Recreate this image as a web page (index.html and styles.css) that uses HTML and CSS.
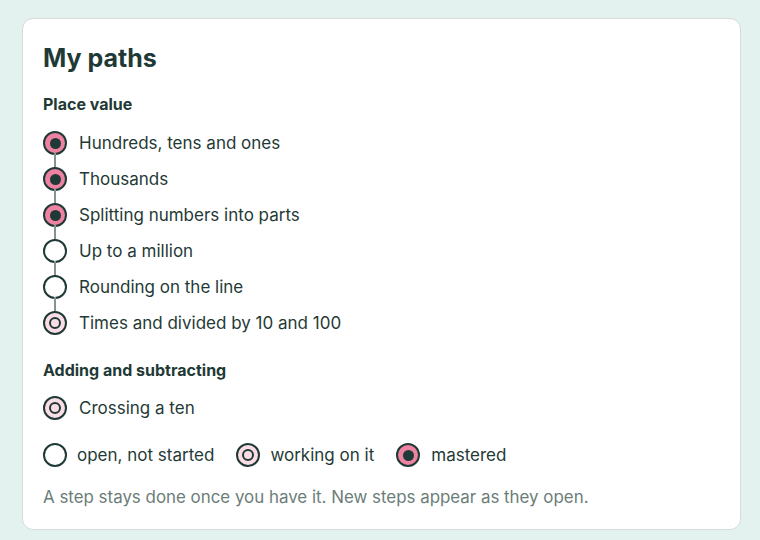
FILE: index.html
```html
<!DOCTYPE html>
<html lang="en">
  <head>
    <meta charset="UTF-8" />
    <meta name="viewport" content="width=device-width, initial-scale=1.0" />
    <title>My paths</title>
    <link rel="stylesheet" href="styles.css">
  </head>
  <body>
    <div class="card">
      <h2 class="title">My paths</h2>

      <h3 class="group">Place value</h3>
      <ul class="steps">
        <li class="step"><span class="dot done"></span>Hundreds, tens and ones</li>
        <li class="step"><span class="dot done"></span>Thousands</li>
        <li class="step"><span class="dot done"></span>Splitting numbers into parts</li>
        <li class="step"><span class="dot"></span>Up to a million</li>
        <li class="step"><span class="dot"></span>Rounding on the line</li>
        <li class="step"><span class="dot work"></span>Times and divided by 10 and 100</li>
      </ul>

      <h3 class="group">Adding and subtracting</h3>
      <ul class="steps">
        <li class="step"><span class="dot work"></span>Crossing a ten</li>
      </ul>

      <div class="legend">
        <span class="key"><span class="dot"></span>open, not started</span>
        <span class="key"><span class="dot work"></span>working on it</span>
        <span class="key"><span class="dot done"></span>mastered</span>
      </div>

      <p class="note">A step stays done once you have it. New steps appear as they open.</p>
    </div>
  </body>
</html>
```

FILE: styles.css
```css
body {
  margin: 0;
  padding: 18px 18px 0 22px;
  background-color: #e3f2ef;
  font-family: Inter, "Noto Sans", sans-serif;
  color: #1f3a36;
}
.card {
  width: 719px;
  box-sizing: border-box;
  background-color: #fff;
  border: 1px solid #d6dbd9;
  border-radius: 11px;
  padding: 23px 20px 21px 20px;
}
.title {
  margin: 0;
  font-size: 25px;
  line-height: 32px;
  font-weight: 700;
}
.group {
  margin: 20px 0 11px;
  font-size: 16px;
  line-height: 20px;
  font-weight: 700;
}
.steps {
  list-style: none;
  margin: 0;
  padding: 0;
}
.steps + .group {
  margin-top: 19px;
  margin-bottom: 10px;
}
.step {
  position: relative;
  display: flex;
  align-items: center;
  gap: 12px;
  height: 36px;
  font-size: 17px;
}
.step:not(:last-child)::after {
  content: "";
  position: absolute;
  left: 11px;
  top: 28px;
  width: 2px;
  height: 16px;
  background-color: #86948f;
}
.dot {
  flex: none;
  width: 24px;
  height: 24px;
  box-sizing: border-box;
  border: 2px solid #1f3a36;
  border-radius: 50%;
  background-color: #fff;
  display: grid;
  place-items: center;
}
.dot.done {
  background-color: #ee82a2;
}
.dot.done::after {
  content: "";
  width: 11px;
  height: 11px;
  border-radius: 50%;
  background-color: #1f3a36;
}
.dot.work {
  background-color: #fcdde6;
}
.dot.work::after {
  content: "";
  width: 12px;
  height: 12px;
  box-sizing: border-box;
  border-radius: 50%;
  border: 2.5px solid #1f3a36;
}
.legend {
  display: flex;
  align-items: center;
  gap: 22px;
  margin-top: 17px;
  font-size: 17px;
}
.key {
  display: flex;
  align-items: center;
  gap: 10px;
  line-height: 24px;
}
.key:last-child {
  gap: 11px;
}
.note {
  margin: 19px 0 0;
  font-size: 16.9px;
  line-height: 22px;
  color: #6b7d78;
}
```
